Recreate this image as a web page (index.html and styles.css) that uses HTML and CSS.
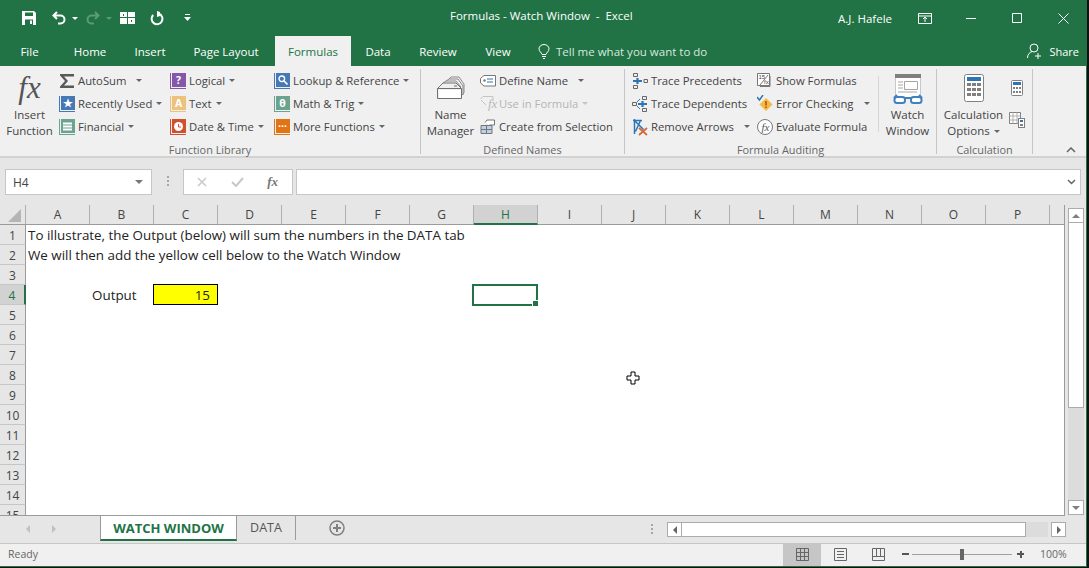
FILE: index.html
```html
<!DOCTYPE html>
<html lang="en">
  <head>
    <meta charset="UTF-8" />
    <title>Formulas - Watch Window - Excel</title>
    <link rel="stylesheet" href="styles.css">
  </head>
  <body>
    <div class="window">
      <!-- Title bar -->
      <div class="titlebar">
        <div class="qat">
          <svg class="q-save" width="14" height="14" viewBox="0 0 14 14"><path d="M0 0h12l2 2v12H0z" fill="#fff"/><path d="M3 1.500h8V5H3zM3 8.500h8V14H3z" fill="#217346"/><path d="M8 9.500h2V13H8z" fill="#fff"/></svg>
          <svg class="q-undo" width="14" height="14" viewBox="0 0 14 14"><path d="M5 1L1.500 4.500 5 8M2 4.500h6.500a4 4 0 0 1 0 8H6" fill="none" stroke="#fff" stroke-width="2"/></svg>
          <span class="q-caret"></span>
          <svg class="q-redo" width="14" height="14" viewBox="0 0 14 14"><path d="M9 1l3.500 3.500L9 8M12 4.500H5.500a4 4 0 0 0 0 8H8" fill="none" stroke="#5a9a78" stroke-width="2"/></svg>
          <span class="q-caret dim"></span>
          <svg class="q-grid" width="15" height="12" viewBox="0 0 15 12"><path d="M0 0h7v5H0zM8 0h7v5H8zM0 6h7v6H0zM8 6h7v6H8z" fill="#fff"/><path d="M3 2h1v2H3zM11 8h1v2h-1z" fill="#217346"/></svg>
          <svg class="q-refresh" width="14" height="15" viewBox="0 0 14 15"><path d="M9 2.800A5.400 5.400 0 1 1 3.200 4" fill="none" stroke="#fff" stroke-width="2"/><path d="M7 0v6l3-1V1z" fill="#fff"/></svg>
          <svg class="q-more" width="7" height="8" viewBox="0 0 7 8"><path d="M1 0h5v1H1zM0 3h7L3.500 7z" fill="#fff"/></svg>
        </div>
        <div class="doc-title">Formulas - Watch Window&nbsp; -&nbsp; Excel</div>
        <div class="win-ctrls">
          <span class="user">A.J. Hafele</span>
          <svg class="display-opt" width="14" height="11" viewBox="0 0 14 11"><path d="M.5.500h13v10H.5zM0 3h14M7 9V4.500M5 6l2-2 2 2" fill="none" stroke="#fff"/></svg>
          <svg class="w-min" width="10" height="10" viewBox="0 0 10 10"><path d="M0 5.500h10" stroke="#fff"/></svg>
          <svg class="w-max" width="10" height="10" viewBox="0 0 10 10"><path d="M.5.500h9v9h-9z" fill="none" stroke="#fff"/></svg>
          <svg class="w-close" width="11" height="11" viewBox="0 0 11 11"><path d="M.5.500l10 10M10.500.500l-10 10" stroke="#fff"/></svg>
        </div>
      </div>

      <!-- Tabs -->
      <div class="tabs">
        <span class="tab file">File</span>
        <span class="tab t-home">Home</span>
        <span class="tab t-insert">Insert</span>
        <span class="tab t-layout">Page Layout</span>
        <span class="tab active">Formulas</span>
        <span class="tab t-data">Data</span>
        <span class="tab t-review">Review</span>
        <span class="tab t-view">View</span>
        <span class="tell">
          <svg width="12" height="15" viewBox="0 0 12 15"><path d="M4 10.500C3.500 8.500 1 7.500 1 4.800a5 4.300 0 0 1 10 0C11 7.500 8.500 8.500 8 10.500zM4 12.500h4M5 14.500h2" fill="none" stroke="#fff"/></svg>
          Tell me what you want to do
        </span>
        <span class="share">
          <svg width="16" height="16" viewBox="0 0 16 16"><circle cx="7" cy="5" r="4" fill="none" stroke="#fff"/><path d="M.5 15c0-4 2.500-6 5-6.500M11 10v6M8 13h6" fill="none" stroke="#fff"/></svg>
          Share
        </span>
      </div>

      <!-- Ribbon -->
      <div class="ribbon">
        <section class="group g-library">
          <div class="group-body">
            <div class="big b-insert">
              <span class="fx-big">fx</span>
              <span>Insert<br>Function</span>
            </div>
            <div class="col c-lib1">
              <div class="cmd">
                <svg class="ic" width="16" height="14" viewBox="0 0 16 14"><path d="M1 0h14v2.500H5L9 7l-4 4.500h10V14H1v-1.500L6 7 1 1.500z" fill="#595959"/></svg>
                AutoSum<i class="caret far"></i>
              </div>
              <div class="cmd"><span class="book blue">★</span>Recently Used<i class="caret"></i></div>
              <div class="cmd">
                <span class="book teal"><svg width="9" height="9" viewBox="0 0 9 9"><path d="M0 1.500h9M0 4.500h9M0 7.500h9" stroke="#fff" stroke-width="2"/></svg></span>
                Financial<i class="caret"></i>
              </div>
            </div>
            <div class="col c-lib2">
              <div class="cmd"><span class="book purple">?</span>Logical<i class="caret"></i></div>
              <div class="cmd"><span class="book sand">A</span>Text<i class="caret"></i></div>
              <div class="cmd">
                <span class="book red"><svg width="9" height="9" viewBox="0 0 9 9"><circle cx="4.500" cy="4.500" r="4.500" fill="#fff"/><path d="M4.500 2v3H7" fill="none" stroke="#d1512d"/></svg></span>
                Date &amp; Time<i class="caret"></i>
              </div>
            </div>
            <div class="col">
              <div class="cmd">
                <span class="book blue"><svg width="10" height="10" viewBox="0 0 10 10"><circle cx="3.800" cy="3.800" r="2.800" fill="none" stroke="#fff" stroke-width="1.300"/><path d="M6 6l3.500 3.500" stroke="#fff" stroke-width="1.600"/></svg></span>
                Lookup &amp; Reference<i class="caret"></i>
              </div>
              <div class="cmd"><span class="book teal">θ</span>Math &amp; Trig<i class="caret"></i></div>
              <div class="cmd"><span class="book orange">···</span>More Functions<i class="caret"></i></div>
            </div>
          </div>
          <div class="group-label">Function Library</div>
        </section>

        <section class="group g-names">
          <div class="group-body">
            <div class="big b-name">
              <svg width="30" height="30" viewBox="0 0 30 30"><path d="M13 5l2-2h8l5 7v9l-2 2" fill="none" stroke="#8a8a8a"/><path d="M10 7l3-2h9l5 7v9" fill="none" stroke="#8a8a8a"/><path d="M7 9l3-2h10l5 6" fill="none" stroke="#8a8a8a"/><path d="M1.500 14.500L7 9h13l5.500 5.500v10h-24z" fill="#f0f0f0" stroke="#6f6f6f"/><path d="M1.500 14.500h24" stroke="#6f6f6f"/><path d="M3 16h22v8H3z" fill="#fff"/><path d="M18 12h3" stroke="#6f6f6f"/></svg>
              <span>Name<br>Manager</span>
            </div>
            <div class="col">
              <div class="cmd">
                <svg class="ic" width="16" height="12" viewBox="0 0 16 12"><path d="M4 .5h11.500v10.500H4L.5 8V3.500z" fill="#fff" stroke="#777"/><path d="M7 4h6M7 7h6" stroke="#2e75b6"/><circle cx="4.500" cy="5.500" r="1.200" fill="#777"/></svg>
                Define Name<i class="caret far"></i>
              </div>
              <div class="cmd disabled">
                <svg class="ic" width="16" height="15" viewBox="0 0 16 15"><path d="M3 .5h10v4.500M1 4l5 5" fill="none" stroke="#c4c4c4"/><path d="M3 .5L.5 3" stroke="#c4c4c4"/></svg>
                <em class="fx-mini">fx</em>Use in Formula<i class="caret"></i>
              </div>
              <div class="cmd">
                <svg class="ic" width="16" height="15" viewBox="0 0 16 15"><path d="M1 6.500h11v8H1z" fill="#bcd0e6" stroke="#777"/><path d="M1 10.500h11M6.500 6.500v8" stroke="#777"/><path d="M5 3.500L7 1h7.500v5h-5" fill="#fff" stroke="#777"/></svg>
                Create from Selection
              </div>
            </div>
          </div>
          <div class="group-label">Defined Names</div>
        </section>

        <section class="group g-audit">
          <div class="group-body">
            <div class="col c-aud1">
              <div class="cmd">
                <svg class="ic" width="16" height="18" viewBox="0 0 16 18"><path d="M1.500 1.500h4v3h-4zM1.500 13.500h4v3h-4zM12 7.500h3.500v3H12z" fill="none" stroke="#666"/><path d="M1 9h9M5.500 6v6" stroke="#2e75b6" stroke-width="2.200"/></svg>
                Trace Precedents
              </div>
              <div class="cmd">
                <svg class="ic" width="16" height="18" viewBox="0 0 16 18"><path d="M.5 7.500h4v3h-4zM10.500 1.500h4v3h-4zM10.500 13.500h4v3h-4z" fill="none" stroke="#666"/><path d="M6 9h9M10.500 6v6" stroke="#2e75b6" stroke-width="2.200"/><path d="M5 7l3-3M5 11l3 3" stroke="#2e75b6"/></svg>
                Trace Dependents
              </div>
              <div class="cmd">
                <svg class="ic" width="16" height="18" viewBox="0 0 16 18"><path d="M2.500 1v15M1 2.500h9M2.500 2.500l9 9M8.500 2.500l-5 11" fill="none" stroke="#2e75b6" stroke-width="1.500"/><path d="M7 10l8 7M15 10l-8 7" stroke="#d2693a" stroke-width="1.700"/></svg>
                Remove Arrows<i class="caret far"></i>
              </div>
            </div>
            <div class="col c-aud2">
              <div class="cmd">
                <svg class="ic" width="16" height="16" viewBox="0 0 16 16"><path d="M.5.500h12v12H.5z" fill="#fff" stroke="#777"/><path d="M13 3v10.500H3" fill="none" stroke="#777"/><path d="M3 12L11 2" stroke="#777"/><text x="1.500" y="6" class="mini-num">15</text><text x="7" y="11" class="mini-num">fx</text></svg>
                Show Formulas
              </div>
              <div class="cmd">
                <svg class="ic" width="16" height="18" viewBox="0 0 16 18"><path d="M9 3.500l6 6-6 6-6-6z" fill="#f4b942" stroke="#f4b942" stroke-linejoin="round"/><path d="M9 6v4.500M9 11.500v1.500" stroke="#a5520f" stroke-width="1.500"/><path d="M0 2l2.500 3L6 0" stroke="#2e75b6" stroke-width="1.500" fill="none"/></svg>
                Error Checking<i class="caret far"></i>
              </div>
              <div class="cmd">
                <svg class="ic" width="16" height="16" viewBox="0 0 16 16"><circle cx="8" cy="8" r="7.500" fill="#fff" stroke="#777"/></svg>
                <em class="fx-round">fx</em>Evaluate Formula
              </div>
            </div>
            <i class="vsep"></i>
            <div class="big b-watch">
              <svg width="30" height="30" viewBox="0 0 30 30"><path d="M2 0h26v25H2z" fill="#fff"/><path d="M2 0h26v4H2z" fill="#7f7f7f"/><path d="M2.500 4v20M27.500 4v20" stroke="#c8c8c8"/><path d="M11.500 7.500h13v8h-13z" fill="#fff" stroke="#a6a6a6"/><path d="M5 8h5M5 11h5M5 14h5M5 18h19" stroke="#a6a6a6"/><path d="M1 24l3-3M29 24l-3-3M12 24h6" fill="none" stroke="#3f80c0" stroke-width="2"/><rect x="1.500" y="23" width="10.500" height="6" rx="2.500" fill="#fff" stroke="#3f80c0" stroke-width="2"/><rect x="18" y="23" width="10.500" height="6" rx="2.500" fill="#fff" stroke="#3f80c0" stroke-width="2"/></svg>
              <span>Watch<br>Window</span>
            </div>
          </div>
          <div class="group-label">Formula Auditing</div>
        </section>

        <section class="group g-calc">
          <div class="group-body">
            <div class="big b-calc">
              <svg width="20" height="28" viewBox="0 0 20 28"><rect x=".5" y=".5" width="19" height="27" rx="2" fill="#fff" stroke="#808080"/><path d="M3 3h14v4H3z" fill="#2e75b6"/><path d="M3 9h4v3H3zM8 9h4v3H8zM13 9h4v3h-4zM3 14h4v3H3zM8 14h4v3H8zM13 14h4v3h-4zM3 19h4v3H3zM8 19h4v3H8zM13 19h4v3h-4z" fill="#808080"/></svg>
              <span>Calculation<br>Options<i class="caret"></i></span>
            </div>
            <div class="col c-calc-small">
              <svg width="12" height="16" viewBox="0 0 12 16"><rect x=".5" y=".5" width="11" height="15" rx="1" fill="#fff" stroke="#808080"/><path d="M2 2h8v3H2z" fill="#2e75b6"/><path d="M2 7h2v2H2zM5 7h2v2H5zM8 7h2v2H8zM2 11h2v2H2zM5 11h2v2H5zM8 11h2v2H8z" fill="#808080"/></svg>
              <svg width="16" height="16" viewBox="0 0 16 16"><path d="M.5.500h11v11H.5z" fill="#fff" stroke="#808080"/><path d="M.5 4h11M.5 8h11M4 .5v11M8 .5v11" stroke="#b0b0b0"/><rect x="9.500" y="6.500" width="6" height="9" fill="#fff" stroke="#808080"/><path d="M11 8h3v2h-3z" fill="#2e75b6"/><path d="M11 12h3v2h-3z" fill="#808080"/></svg>
            </div>
          </div>
          <div class="group-label">Calculation</div>
        </section>
        <svg class="collapse" width="10" height="6" viewBox="0 0 10 6"><path d="M1 5l4-4 4 4" fill="none" stroke="#666" stroke-width="1.500"/></svg>
      </div>

      <!-- Formula bar -->
      <div class="formula-bar">
        <div class="namebox">H4<i class="caret dark"></i></div>
        <div class="dots"><b></b><b></b><b></b></div>
        <div class="fx-box">
          <svg width="10" height="10" viewBox="0 0 10 10"><path d="M1 1l8 8M9 1l-8 8" stroke="#c8c8c8" stroke-width="1.500"/></svg>
          <svg width="13" height="10" viewBox="0 0 13 10"><path d="M1 5l4 4 7-8" fill="none" stroke="#c8c8c8" stroke-width="2"/></svg>
          <em>fx</em>
        </div>
        <div class="fx-input">
          <svg width="9" height="6" viewBox="0 0 9 6"><path d="M1 1l3.500 3.500L8 1" fill="none" stroke="#666" stroke-width="1.500"/></svg>
        </div>
      </div>

      <!-- Sheet -->
      <div class="sheet-area">
        <div class="sheet">
          <div class="col-heads" id="colHeads">
            <span class="corner"><svg width="13" height="13" viewBox="0 0 13 13"><path d="M13 0v13H0z" fill="#b5b5b5"/></svg></span>
          </div>
          <div class="rows" id="rows"></div>
          <svg class="pointer" width="15" height="15" viewBox="0 0 15 15"><path d="M5 1h4v4h4v4H9v4H5V9H1V5h4z" fill="#fff" stroke="#000"/></svg>
        </div>
        <div class="vscroll">
          <span class="sb-btn"><i class="tri up"></i></span>
          <span class="thumb"></span>
          <span class="track"></span>
          <span class="sb-btn"><i class="tri down"></i></span>
        </div>
      </div>

      <!-- Sheet tabs -->
      <div class="sheet-tabs">
        <div class="tab-nav"><i class="tri left"></i><i class="tri right"></i></div>
        <div class="s-tab on">WATCH WINDOW</div>
        <div class="s-tab">DATA</div>
        <svg class="add" width="16" height="16" viewBox="0 0 16 16"><circle cx="8" cy="8" r="7" fill="none" stroke="#808080" stroke-width="1.500"/><path d="M4 8h8M8 4v8" stroke="#808080" stroke-width="2"/></svg>
        <div class="dots h"><b></b><b></b><b></b></div>
        <div class="hscroll">
          <span class="sb-btn"><i class="tri left dark"></i></span>
          <span class="hthumb"></span>
          <span class="htrack"></span>
          <span class="sb-btn"><i class="tri right dark"></i></span>
        </div>
      </div>

      <!-- Status bar -->
      <div class="status">
        <span class="ready">Ready</span>
        <span class="view on">
          <svg width="13" height="13" viewBox="0 0 13 13"><path d="M.5.500h12v12H.5zM.5 4.500h12M.5 8.500h12M4.500.5v12M8.500.5v12" fill="none" stroke="#666"/></svg>
        </span>
        <span class="view">
          <svg width="13" height="13" viewBox="0 0 13 13"><path d="M.5.500h12v12H.5z" fill="none" stroke="#666"/><path d="M3 3.500h7M3 6.500h7M3 9.500h7" stroke="#666"/></svg>
        </span>
        <span class="view">
          <svg width="13" height="13" viewBox="0 0 13 13"><path d="M.5.500h12v12H.5zM.5 8.500h12M4.500.5v8M8.500.5v8" fill="none" stroke="#666"/></svg>
        </span>
        <span class="zoom-minus"></span>
        <span class="slider"><i></i></span>
        <span class="zoom-plus"></span>
        <span class="pct">100%</span>
      </div>
    </div>

    <script src="sheet.js"></script>
  </body>
</html>
```

FILE: sheet.js
```js
// builds the column heads and row cells
const colNames = "ABCDEFGHIJKLMNOP".split("");
const cellText = {
  "1A": "To illustrate, the Output (below) will sum the numbers in the DATA tab",
  "2A": "We will then add the yellow cell below to the Watch Window",
  "4B": "Output",
  "4C": "15",
};

const heads = document.getElementById("colHeads");
colNames.forEach((name) => {
  const head = document.createElement("span");
  head.className = name === "H" ? "col-head sel" : "col-head";
  head.textContent = name;
  heads.appendChild(head);
});

const rows = document.getElementById("rows");
for (let r = 1; r <= 15; r++) {
  const row = document.createElement("div");
  row.className = "row";
  const num = document.createElement("span");
  num.className = r === 4 ? "row-head sel" : "row-head";
  num.textContent = r;
  row.appendChild(num);
  colNames.forEach((name) => {
    const cell = document.createElement("span");
    cell.className = "cell";
    const key = r + name;
    if (cellText[key]) cell.textContent = cellText[key];
    if (key === "4C") cell.classList.add("output");
    if (key === "4H") cell.classList.add("current");
    row.appendChild(cell);
  });
  rows.appendChild(row);
}
```

FILE: styles.css
```css
* {
  box-sizing: border-box;
}

body {
  margin: 0;
  background: #111;
  font-family: "Open Sans", "Noto Sans", sans-serif;
  font-size: 12px;
  color: #444;
  overflow: hidden;
}

.window {
  width: 1087px;
  height: 567px;
  display: flex;
  flex-direction: column;
  background: #f0f0f0;
  border-right: 1px solid #217346;
  border-bottom: 1px solid #217346;
  overflow: hidden;
}

/* Title bar */
.titlebar {
  height: 36px;
  flex: none;
  background: #217346;
  color: #fff;
  display: flex;
  align-items: center;
  position: relative;
}

.qat {
  display: flex;
  align-items: center;
  padding-left: 22px;
}

.q-undo { margin-left: 16px; }
.q-caret {
  margin-left: 6px;
  border: 3px solid transparent;
  border-top: 3px solid #fff;
  border-bottom: 0;
}
.q-caret.dim { border-top-color: #5a9a78; }
.q-redo { margin-left: 8px; }
.q-grid { margin-left: 8px; }
.q-refresh { margin-left: 15px; }
.q-more { margin-left: 20px; }

.doc-title {
  position: absolute;
  left: 450px;
  top: 8px;
  font-size: 11.5px;
  white-space: nowrap;
}

.win-ctrls {
  margin-left: auto;
  display: flex;
  align-items: center;
  padding-right: 17px;
}

.user { font-size: 11.5px; }
.display-opt { margin-left: 26px; }
.w-min { margin-left: 34px; }
.w-max { margin-left: 36px; }
.w-close { margin-left: 36px; }

/* Ribbon tabs */
.tabs {
  height: 30px;
  flex: none;
  background: #217346;
  color: #fff;
  display: flex;
  align-items: center;
  position: relative;
}

.tab {
  height: 30px;
  line-height: 31px;
  font-size: 11.5px;
  text-align: center;
  flex: none;
}

.tab.file { width: 59px; }
.t-home { width: 62px; }
.t-insert { width: 58px; }
.t-layout { width: 94px; }
.tab.active { width: 76px; margin-left: 2px; background: #f0f0f0; color: #217346; }
.t-data { width: 54px; }
.t-review { width: 66px; }
.t-view { width: 54px; }

.tell {
  display: flex;
  align-items: center;
  gap: 6px;
  margin-left: 13px;
  font-size: 11.5px;
  color: #d8e8df;
}

.share {
  margin-left: auto;
  display: flex;
  align-items: center;
  gap: 6px;
  padding-right: 7px;
  font-size: 11px;
}

/* Ribbon */
.ribbon {
  height: 92px;
  flex: none;
  background: #f0f0f0;
  border-bottom: 2px solid #d2d2d2;
  display: flex;
  position: relative;
  font-size: 11.3px;
  color: #444;
}

.group {
  display: flex;
  flex-direction: column;
  height: 85px;
  margin-top: 3px;
  border-right: 1px solid #c6c6c6;
}

.g-library { width: 421px; }
.g-names { width: 204px; }
.g-audit { width: 312px; }
.g-calc { width: 96px; }

.group-body {
  height: 73px;
  flex: none;
  display: flex;
}

.group-label {
  height: 12px;
  text-align: center;
  font-size: 10.9px;
  color: #666;
  line-height: 16px;
  white-space: nowrap;
}

.big {
  display: flex;
  flex-direction: column;
  align-items: center;
  text-align: center;
  line-height: 16px;
  flex: none;
  font-size: 11.5px;
}

.big span:last-child { display: block; }

.b-insert { width: 59px; }
.fx-big {
  font-family: "Liberation Serif", serif;
  font-style: italic;
  font-size: 31px;
  color: #555;
  line-height: 38px;
  height: 38px;
}

.b-name { width: 59px; padding-top: 5px; }
.b-name svg { margin-bottom: 3px; }
.b-watch { width: 57px; padding-top: 5px; }
.b-watch svg { margin-bottom: 3px; }
.b-calc { width: 73px; padding-top: 5px; }
.b-calc svg { margin-bottom: 5px; }

.col {
  display: flex;
  flex-direction: column;
  flex: none;
}

.c-lib1 { width: 111px; }
.c-lib2 { width: 104px; }
.c-aud1 { width: 132px; padding-left: 7px; }
.c-aud2 { width: 121px; }
.c-calc-small {
  padding-top: 11px;
  gap: 16px;
  width: 20px;
  align-items: center;
  margin-left: -3px;
}

.cmd {
  height: 23px;
  flex: none;
  display: flex;
  align-items: center;
  white-space: nowrap;
  position: relative;
}

.cmd.disabled { color: #b4b4b4; }

.ic, .book {
  flex: none;
  margin-right: 3px;
}

.book {
  width: 16px;
  height: 16px;
  display: flex;
  align-items: center;
  justify-content: center;
  border-left: 1px solid;
  border-bottom: 1px solid;
  box-shadow: inset 1px 0 0 #f0f0f0, inset 0 -1px 0 #f0f0f0;
  color: #fff;
  font-size: 10.5px;
  font-weight: 700;
  line-height: 14px;
}

.blue { background: #4578b4; border-color: #4578b4; }
.teal { background: #6aa38f; border-color: #6aa38f; }
.purple { background: #8457a8; border-color: #8457a8; }
.sand { background: #ecc27d; border-color: #ecc27d; }
.red { background: #d1512d; border-color: #d1512d; }
.orange { background: #e17516; border-color: #e17516; }

.mini-num {
  font-family: "Liberation Sans", sans-serif;
  font-size: 6px;
  fill: #444;
}

.fx-mini {
  margin-left: -11px;
  margin-right: 0;
  width: 11px;
  font-family: "Liberation Serif", serif;
  color: #b8b8b8;
  font-size: 13px;
}

.fx-round {
  margin-left: -16px;
  margin-right: 5px;
  width: 11px;
  font-family: "Liberation Serif", serif;
  font-size: 11px;
  text-align: center;
  color: #555;
}

.caret {
  display: inline-block;
  margin-left: 4px;
  border: 3px solid transparent;
  border-top: 3px solid #666;
  border-bottom: 0;
  vertical-align: middle;
}

.caret.far { margin-left: 10px; }
.cmd.disabled .caret { border-top-color: #c4c4c4; }

.vsep {
  width: 1px;
  height: 56px;
  margin-top: 7px;
  background: #d6d6d6;
  flex: none;
}

.collapse {
  position: absolute;
  left: 1066px;
  top: 81px;
}

/* Formula bar */
.formula-bar {
  height: 47px;
  flex: none;
  background: #e6e6e6;
  display: flex;
  align-items: flex-start;
  padding: 11px 5px 0 5px;
}

.namebox, .fx-box, .fx-input {
  height: 26px;
  background: #fff;
  border: 1px solid #c6c6c6;
  display: flex;
  align-items: center;
}

.namebox {
  width: 147px;
  padding: 0 8px 0 7px;
  justify-content: space-between;
  color: #444;
  font-size: 12px;
}

.caret.dark { border-width: 4px 4px 0; border-top-color: #777; }

.dots {
  display: flex;
  flex-direction: column;
  gap: 2px;
  width: 31px;
  align-items: center;
  padding-top: 7px;
}

.dots b {
  width: 2px;
  height: 2px;
  background: #a6a6a6;
}

.fx-box {
  width: 110px;
  justify-content: space-between;
  padding: 0 14px 0 13px;
}

.fx-box em {
  font-family: "Liberation Serif", serif;
  font-size: 13px;
  font-weight: 700;
  color: #777;
}

.fx-input {
  flex: 1;
  margin-left: 3px;
  justify-content: flex-end;
  padding-right: 4px;
}

/* Sheet */
.sheet-area {
  height: 311px;
  flex: none;
  display: flex;
  background: #e6e6e6;
}

.sheet {
  width: 1065px;
  flex: none;
  position: relative;
  overflow: hidden;
  border-right: 1px solid #9b9b9b;
  border-bottom: 1px solid #9b9b9b;
}

.col-heads {
  display: flex;
  height: 20px;
  border-bottom: 1px solid #9b9b9b;
  color: #444;
  background: #e6e6e6;
}

.corner {
  width: 26px;
  flex: none;
  display: flex;
  justify-content: flex-end;
  align-items: flex-end;
  padding: 0 4px 2px 0;
  border-right: 1px solid #b0b0b0;
}

.col-head {
  width: 64px;
  flex: none;
  line-height: 19px;
  text-align: center;
  border-right: 1px solid #b0b0b0;
}

.col-head.sel {
  background: #d2d2d2;
  color: #217346;
  border-bottom: 2px solid #217346;
  margin-bottom: -1px;
}

.rows {
  background: #fff;
  color: #222;
}

.row {
  display: flex;
  height: 20px;
}

.row-head {
  width: 26px;
  flex: none;
  background: #e6e6e6;
  border-right: 1px solid #9b9b9b;
  border-bottom: 1px solid #c6c6c6;
  line-height: 21px;
  text-align: center;
  color: #444;
}

.row-head.sel {
  background: #d2d2d2;
  color: #217346;
  border-right: 2px solid #217346;
}

.cell {
  width: 64px;
  flex: none;
  height: 20px;
  padding: 0 2px;
  line-height: 21px;
  white-space: nowrap;
  font-size: 13.4px;
}

.cell.output {
  background: #ff0;
  border: 1px solid #000;
  width: 65px;
  height: 21px;
  margin: -1px -1px 0 -1px;
  text-align: right;
  padding: 0 7px 0 0;
  line-height: 20px;
}

.cell.current {
  border: 2px solid #217346;
  position: relative;
  width: 66px;
  height: 22px;
  margin: -1px -1px -1px -1px;
}

.cell.current::after {
  content: "";
  position: absolute;
  right: -3px;
  bottom: -3px;
  width: 5px;
  height: 5px;
  background: #217346;
  border: 1px solid #fff;
}

.pointer {
  position: absolute;
  left: 626px;
  top: 166px;
}

/* Scrollbars */
.vscroll {
  width: 16px;
  margin: 3px 0 0 3px;
  display: flex;
  flex-direction: column;
  background: #e0e0e0;
  height: 307px;
}

.sb-btn {
  flex: none;
  width: 16px;
  height: 15px;
  background: #fff;
  border: 1px solid #ababab;
  display: flex;
  align-items: center;
  justify-content: center;
}

.thumb {
  height: 185px;
  flex: none;
  background: #fff;
  border: 1px solid #ababab;
  border-top: 0;
}

.track { flex: 1; background: #dcdcdc; }

.tri {
  display: block;
  width: 0;
  height: 0;
  border: 4px solid transparent;
}

.tri.up { border-top: 0; border-bottom-color: #808080; }
.tri.down { border-bottom: 0; border-top-color: #808080; }
.tri.left { border-left: 0; border-right-color: #c0c0c0; }
.tri.right { border-right: 0; border-left-color: #c0c0c0; }
.tri.left.dark { border-right-color: #666; }
.tri.right.dark { border-left-color: #666; }

/* Sheet tabs */
.sheet-tabs {
  height: 27px;
  flex: none;
  background: #e6e6e6;
  display: flex;
  align-items: flex-start;
}

.tab-nav {
  width: 100px;
  height: 25px;
  display: flex;
  align-items: center;
  gap: 22px;
  padding-left: 26px;
  flex: none;
}

.s-tab {
  width: 59px;
  height: 24px;
  line-height: 24px;
  flex: none;
  text-align: center;
  font-size: 12.5px;
  color: #555;
  border-right: 1px solid #9b9b9b;
}

.s-tab.on {
  width: 137px;
  height: 25px;
  line-height: 25px;
  background: #fff;
  color: #217346;
  font-size: 13px;
  font-weight: 700;
  border-left: 1px solid #9b9b9b;
  border-bottom: 2px solid #217346;
}

.add { margin: 4px 0 0 33px; flex: none; }

.dots.h {
  width: 16px;
  padding-top: 8px;
  margin-left: 299px;
  flex: none;
}

.hscroll {
  width: 399px;
  height: 15px;
  margin: 6px 0 0 7px;
  display: flex;
  flex: none;
}

.hscroll .sb-btn { width: 15px; }

.hthumb {
  width: 344px;
  flex: none;
  background: #fff;
  border: 1px solid #ababab;
  border-left: 0;
}

.htrack { flex: 1; background: #dcdcdc; margin-right: 3px; }

/* Status bar */
.status {
  height: 23px;
  flex: none;
  background: #f0f0f0;
  border-top: 1px solid #c6c6c6;
  padding-bottom: 2px;
  display: flex;
  align-items: center;
  font-size: 10.5px;
  color: #666;
}

.ready {
  padding-left: 8px;
  width: 783px;
  flex: none;
}

.view {
  width: 38px;
  height: 22px;
  padding-bottom: 2px;
  margin-bottom: -2px;
  flex: none;
  display: flex;
  align-items: center;
  justify-content: center;
}

.view.on { background: #c6c6c6; }

.zoom-minus, .zoom-plus {
  position: relative;
  flex: none;
  width: 7px;
  height: 2px;
  background: #555;
  margin-left: 5px;
}

.slider {
  width: 100px;
  height: 1px;
  background: #a0a0a0;
  margin-left: 3px;
  flex: none;
  position: relative;
}

.slider i {
  position: absolute;
  left: 48px;
  top: -5px;
  width: 4px;
  height: 11px;
  background: #666;
}

.zoom-plus { margin-left: 5px; }

.zoom-plus::after {
  content: "";
  position: absolute;
  left: 2.5px;
  top: -2.5px;
  width: 2px;
  height: 7px;
  background: #555;
}

.pct { margin-left: 16px; }
```
